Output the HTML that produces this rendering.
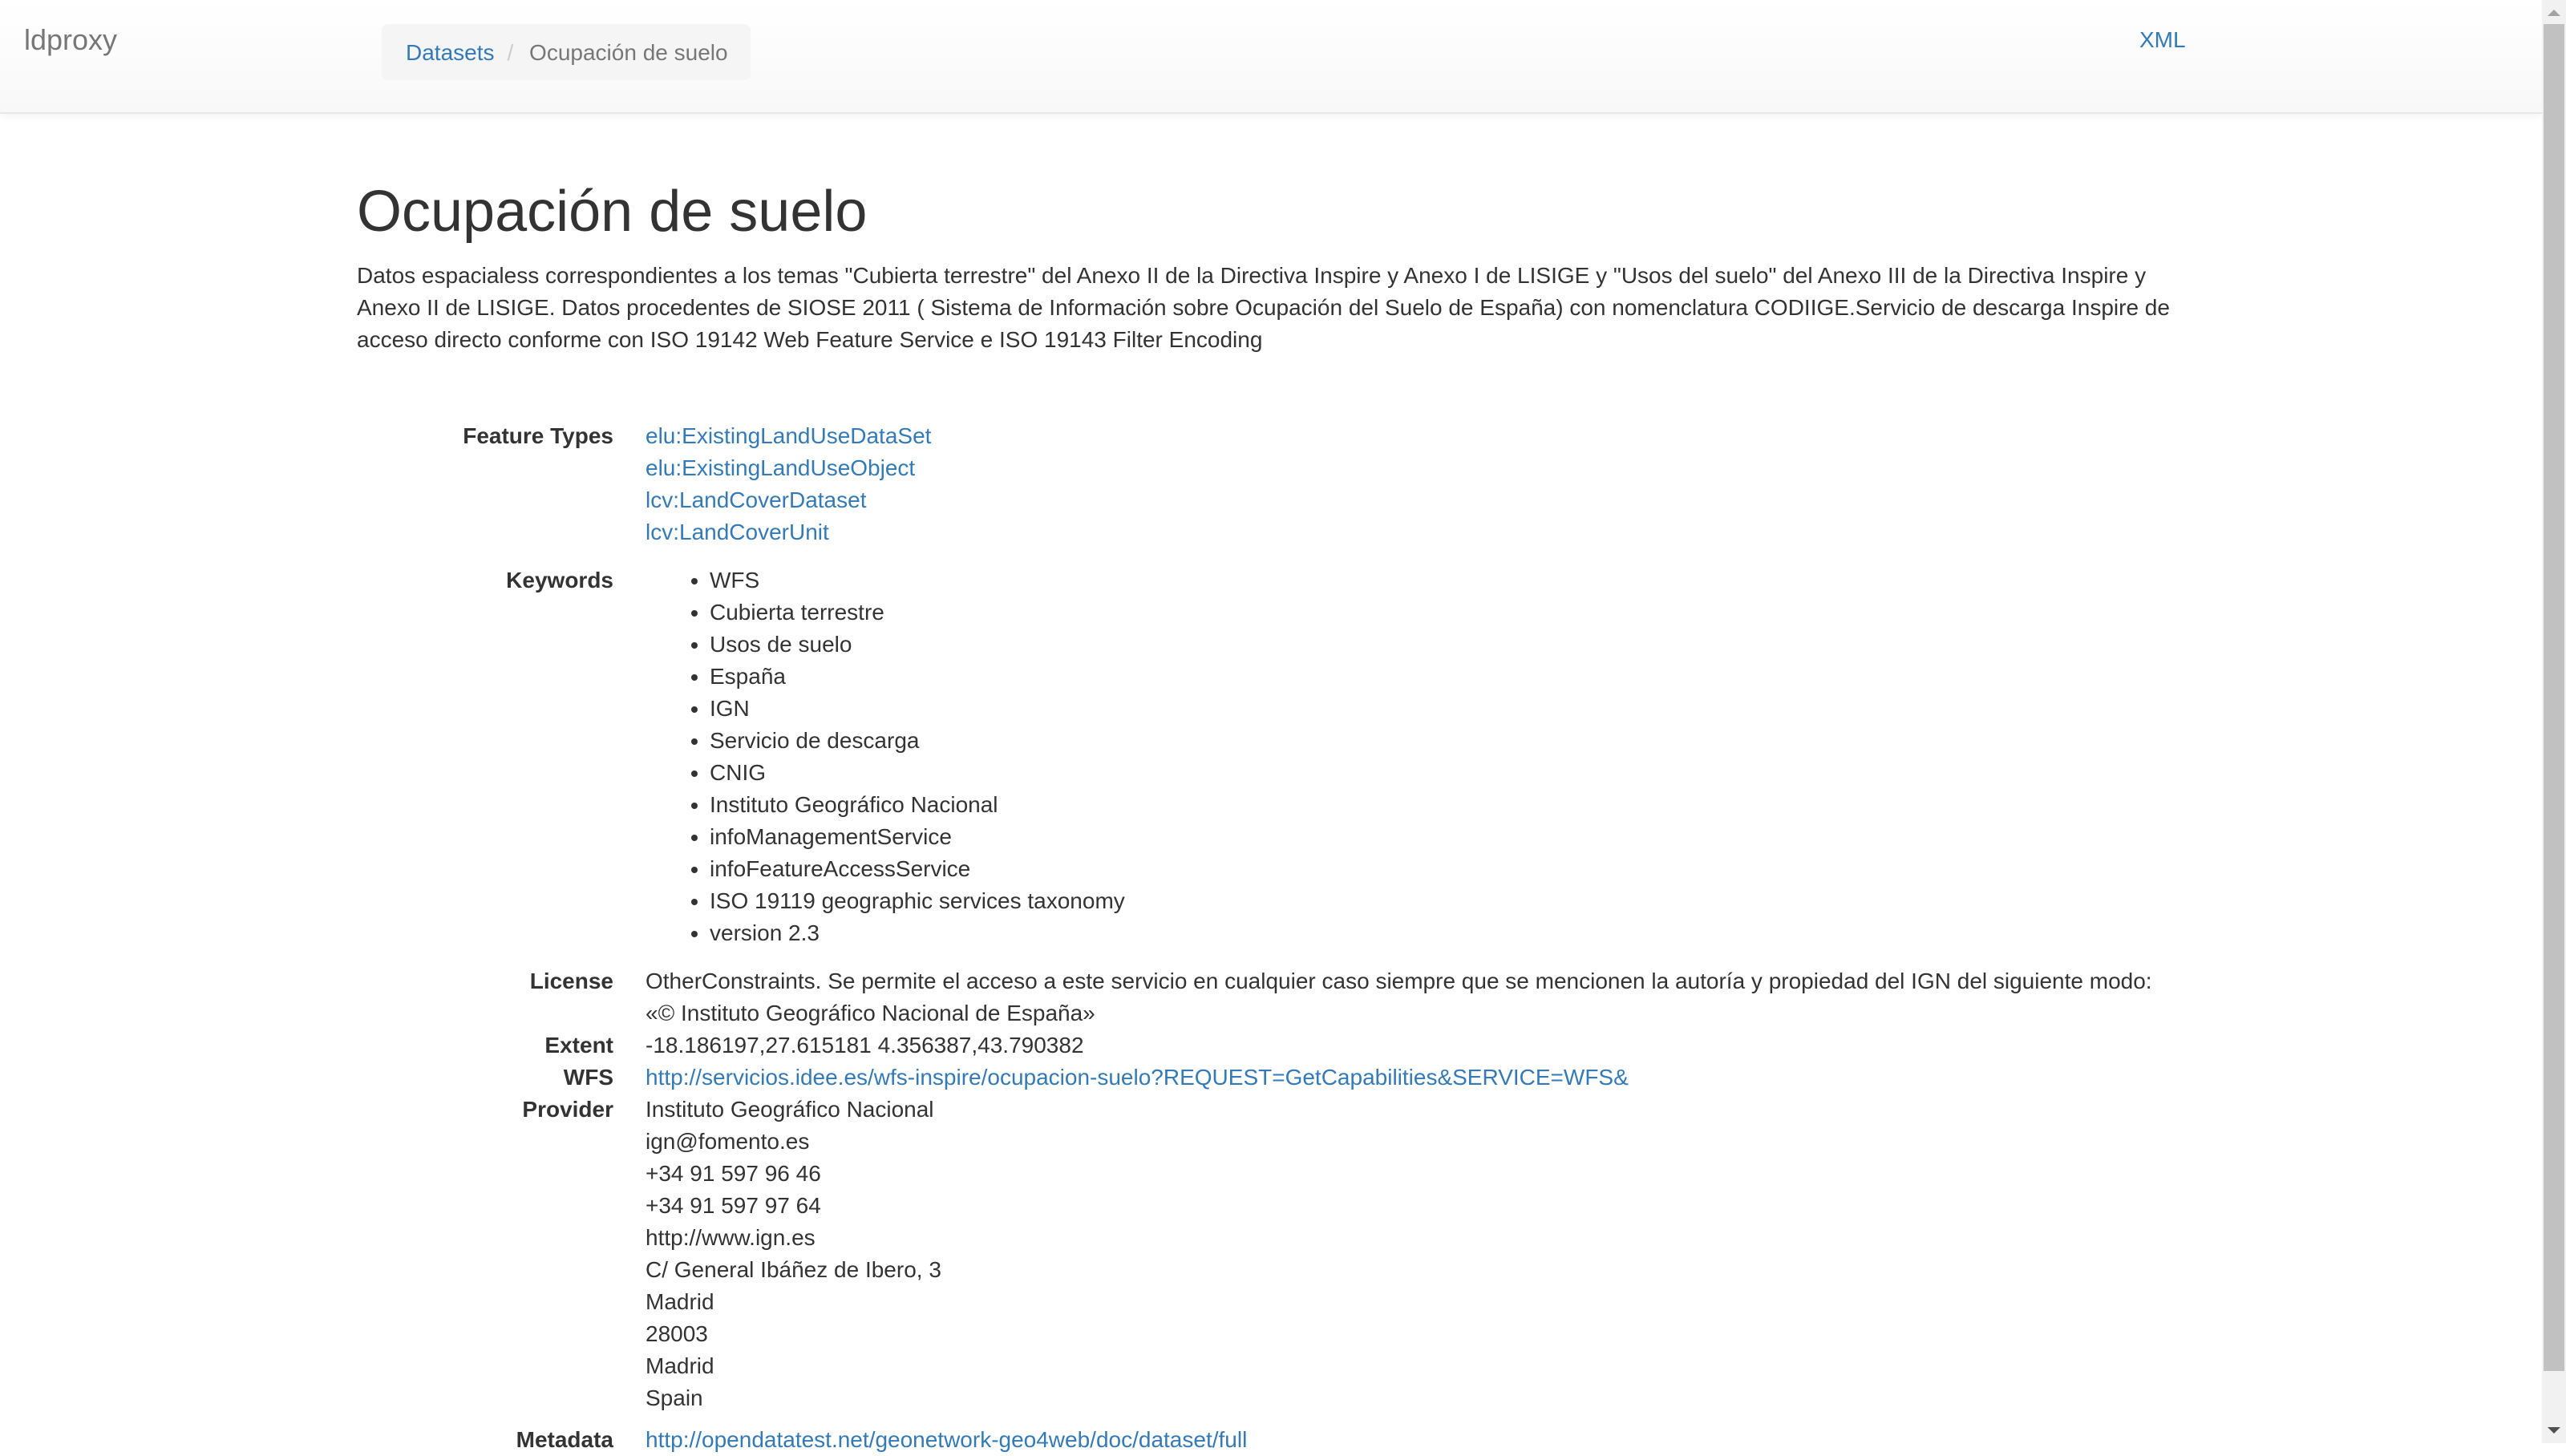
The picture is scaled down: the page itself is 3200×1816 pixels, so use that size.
<!DOCTYPE html>
<html><head><meta charset="utf-8"><style>
html{zoom:2}
body{margin:0;width:1600px;height:900px;overflow:hidden;font-family:"Liberation Sans",Arial,sans-serif;font-size:14px;line-height:20px;color:#333;background:#fff;position:relative}
a{color:#337ab7;text-decoration:none}
.nav{position:absolute;left:0;top:0;width:1585px;height:70px;background:linear-gradient(#fff,#f8f8f8);border-bottom:1px solid #e7e7e7;box-shadow:0 1px 5px rgba(0,0,0,.06)}
.brand{position:absolute;left:15px;top:15px;font-size:18px;color:#777;line-height:20px}
.bc{position:absolute;left:238px;top:15px;height:35px;box-sizing:border-box;padding:8px 14px 7px 15px;background:#f5f5f5;border-radius:4px;color:#777;white-space:nowrap}
.bc .sep{color:#ccc;padding:0 6px 0 8px}
.xml{position:absolute;left:1334px;top:15px}
.c{position:absolute;left:222.5px;top:0;width:1140px}
h1{font-size:36px;font-weight:500;margin:0;position:absolute;top:112px;line-height:40px;white-space:nowrap}
p{position:absolute;top:162px;margin:0;width:1140px}
dl{position:absolute;top:262px;margin:0;width:1140px}
dt{float:left;clear:left;width:160px;text-align:right;font-weight:bold}
dd{margin-left:180px}
dd.pv{margin-bottom:6px}
ul{margin:0 0 10px;padding-left:40px}
ul.lu{list-style:none;padding-left:0}
.sb{position:absolute;left:1585px;top:0;width:15px;height:900px;background:#f1f1f1}
.th{position:absolute;left:1px;top:15px;width:13px;height:840px;background:#c1c1c1}
.up,.dn{position:absolute;left:3.5px;width:0;height:0;border-left:4px solid transparent;border-right:4px solid transparent}
.up{top:6px;border-bottom:4px solid #a3a3a3}
.dn{top:890px;border-top:4px solid #505050}
</style></head><body>
<div class="nav">
<div class="brand">ldproxy</div>
<div class="bc"><a href="#">Datasets</a><span class="sep">/</span> Ocupación de suelo</div>
<a class="xml" href="#">XML</a>
</div>
<div class="c">
<h1>Ocupación de suelo</h1>
<p>Datos espacialess correspondientes a los temas "Cubierta terrestre" del Anexo II de la Directiva Inspire y Anexo I de LISIGE y "Usos del suelo" del Anexo III de la Directiva Inspire y Anexo II de LISIGE. Datos procedentes de SIOSE 2011 ( Sistema de Información sobre Ocupación del Suelo de España) con nomenclatura CODIIGE.Servicio de descarga Inspire de acceso directo conforme con ISO 19142 Web Feature Service e ISO 19143 Filter Encoding</p>
<dl>
<dt>Feature Types</dt>
<dd><ul class="lu"><li><a href="#">elu:ExistingLandUseDataSet</a></li><li><a href="#">elu:ExistingLandUseObject</a></li><li><a href="#">lcv:LandCoverDataset</a></li><li><a href="#">lcv:LandCoverUnit</a></li></ul></dd>
<dt>Keywords</dt>
<dd><ul><li>WFS</li><li>Cubierta terrestre</li><li>Usos de suelo</li><li>España</li><li>IGN</li><li>Servicio de descarga</li><li>CNIG</li><li>Instituto Geográfico Nacional</li><li>infoManagementService</li><li>infoFeatureAccessService</li><li>ISO 19119 geographic services taxonomy</li><li>version 2.3</li></ul></dd>
<dt>License</dt>
<dd>OtherConstraints. Se permite el acceso a este servicio en cualquier caso siempre que se mencionen la autoría y propiedad del IGN del siguiente modo: «© Instituto Geográfico Nacional de España»</dd>
<dt>Extent</dt>
<dd>-18.186197,27.615181 4.356387,43.790382</dd>
<dt>WFS</dt>
<dd><a href="#">http://servicios.idee.es/wfs-inspire/ocupacion-suelo?REQUEST=GetCapabilities&amp;SERVICE=WFS&amp;</a></dd>
<dt>Provider</dt>
<dd class="pv">Instituto Geográfico Nacional<br>ign@fomento.es<br>+34 91 597 96 46<br>+34 91 597 97 64<br>http://www.ign.es<br>C/ General Ibáñez de Ibero, 3<br>Madrid<br>28003<br>Madrid<br>Spain</dd>
<dt>Metadata</dt>
<dd><a href="#">http://opendatatest.net/geonetwork-geo4web/doc/dataset/full</a></dd>
</dl>
</div>
<div class="sb"><div class="up"></div><div class="th"></div><div class="dn"></div></div>
</body></html>
